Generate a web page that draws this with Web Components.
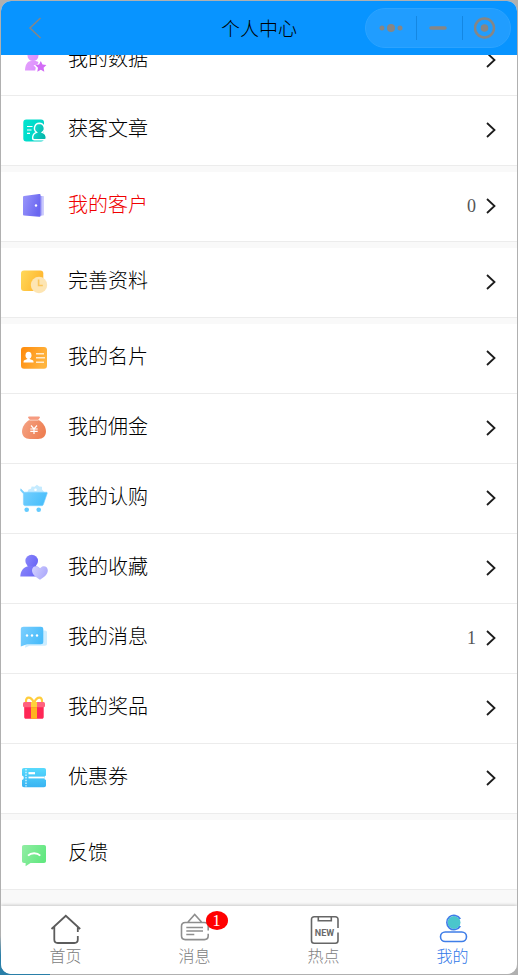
<!DOCTYPE html>
<html lang="zh-CN">
<head>
<meta charset="utf-8">
<meta name="viewport" content="width=device-width, initial-scale=1">
<title>个人中心</title>
<style>
    body {
        margin: 0;
        background: linear-gradient(#b0b0b0 96%, #2a7fa8 98%) left / 50px 100% no-repeat, #b0b0b0;
        font-family: "Noto Sans CJK SC", sans-serif;
        font-weight: 300;
        color: #000;
    }
</style>
</head>
<body>
<mp-window>
    <mp-navbar slot="header">个人中心</mp-navbar>
    <mp-group>
        <mp-cell icon="data">我的数据</mp-cell>
        <mp-cell icon="article">获客文章</mp-cell>
    </mp-group>
    <mp-group>
        <mp-cell icon="door" value="0" highlight>我的客户</mp-cell>
    </mp-group>
    <mp-group>
        <mp-cell icon="profile">完善资料</mp-cell>
    </mp-group>
    <mp-group>
        <mp-cell icon="card">我的名片</mp-cell>
        <mp-cell icon="bag">我的佣金</mp-cell>
        <mp-cell icon="cart">我的认购</mp-cell>
        <mp-cell icon="favorite">我的收藏</mp-cell>
        <mp-cell icon="message" value="1">我的消息</mp-cell>
        <mp-cell icon="gift">我的奖品</mp-cell>
        <mp-cell icon="coupon">优惠券</mp-cell>
    </mp-group>
    <mp-group>
        <mp-cell icon="feedback" plain>反馈</mp-cell>
    </mp-group>
    <mp-tabbar slot="footer">
        <mp-tab icon="home">首页</mp-tab>
        <mp-tab icon="notice" badge="1">消息</mp-tab>
        <mp-tab icon="hot">热点</mp-tab>
        <mp-tab icon="mine" active>我的</mp-tab>
    </mp-tabbar>
</mp-window>

<script>
(function () {
    'use strict';

    function grad(id, from, to) {
        return '<linearGradient id="' + id + '" x1="0" y1="0" x2="1" y2="0.4"><stop offset="0" stop-color="' + from + '"/><stop offset="1" stop-color="' + to + '"/></linearGradient>';
    }

    // 28x28 artwork for the cells, 32x32 line icons for the tabs
    var icons = {
        data: [28, grad('a', '#e3a0fb', '#dd90ff') +
            '<g fill="url(#a)"><circle cx="13" cy="9.5" r="5.5"/><path d="M5 24.5c0-5 2-9.5 6-9.5h4.500c1.500 0 2.500.8 3 1.800l-1.500 2-3.500.5 2.300 2.500-.6 2.700H5z"/></g>' +
            '<path fill="#d26cf6" d="M20.800 15l1.700 3.600 3.900.5-2.800 2.700.7 3.900-3.500-1.900-3.500 1.900.7-3.900-2.800-2.700 3.900-.5z"/>'],
        article: [28, grad('a', '#00e5cf', '#00d2c6') + grad('b', '#16dfd0', '#04b8ac') +
            '<rect x="3.300" y="3.500" width="20.700" height="22" rx="3" fill="url(#a)"/>' +
            '<path d="M7 10.500h5.500M7 14h4.500M7 17.300h3" stroke="#fff" stroke-width="1.200"/>' +
            '<path d="M19.300 7.300a5 5 0 0 1 3 9c2.400.8 4 2.800 4 5.700 0 1-.8 1.800-1.800 1.800H14.400c-1 0-1.800-.8-1.800-1.800 0-2.900 1.600-4.900 3.900-5.700a5 5 0 0 1 2.800-9z" fill="url(#b)" stroke="#fff" stroke-width="1.400"/>'],
        door: [28, grad('a', '#9a97fb', '#6a66f0') +
            '<path d="M18 4h5c.7 0 1 .4 1 1v17.500c0 .7-.3 1-1 1h-5z" fill="#d0cffd"/><path d="M18 4h4.200v19.500H18z" fill="#afadf9"/>' +
            '<path d="M4 4l15-2c1-.1 1.600.4 1.600 1.300v20.200c0 1-.6 1.500-1.600 1.300L4 23.600c-.7-.1-1-.5-1-1.200V5.200C3 4.500 3.300 4.100 4 4z" fill="url(#a)"/>' +
            '<circle cx="16" cy="13.500" r="1.200" fill="#fff"/>'],
        profile: [28, grad('a', '#ffd95a', '#ffb62e') +
            '<rect x="1" y="2.500" width="22.300" height="20.500" rx="3" fill="url(#a)"/>' +
            '<circle cx="19" cy="17" r="8.200" fill="#fde5b3"/>' +
            '<path d="M18.600 11.500v6h4.200" fill="none" stroke="#fbc65b" stroke-width="1.600"/>'],
        card: [28, grad('a', '#ff8a0a', '#ffb43e') +
            '<rect x="1" y="3" width="26" height="21.700" rx="3" fill="url(#a)"/>' +
            '<g fill="#fff"><ellipse cx="8.500" cy="11.200" rx="3" ry="3.500"/><path d="M7.300 13h2.400v2l3 1.300c.6.300.9 1 .9 2.200H3.500c0-1.200.3-1.900.9-2.200l2.900-1.300z"/></g>' +
            '<path d="M16 9.800h8M16 13.800h9M16 18.300h8" stroke="#ffeacb" stroke-width="1.500"/>'],
        bag: [28, grad('a', '#f5a486', '#ee8054') +
            '<path d="M9 2.500h10c.9 0 1.200.8.700 1.500L18 6h-8L8.300 4c-.5-.7-.2-1.500.7-1.500z" fill="#f69b80"/>' +
            '<path d="M9.500 6h9c4 2 7.500 6.500 7.500 11.500 0 4.500-3 7.500-8 7.500h-8c-5 0-8-3-8-7.500C2 12.500 5.500 8 9.500 6z" fill="url(#a)"/><path d="M9.500 6.200h9" stroke="#fbd0bf"/>' +
            '<path d="M11 11.500l3 3.300 3-3.300M10.300 15h7.400M10.300 17.300h7.400M14 14.800V20" fill="none" stroke="#fff" stroke-width="1.200"/>'],
        cart: [28, grad('a', '#7dd2ff', '#4bbffb') +
            '<path d="M7 9l1.500-3.500 2.500-.8.600-2.200 3 .2 2.300-1.900 2.300 1.700 2.800.2v2.800L25 9z" fill="#c5ebff"/><circle cx="15.500" cy="5.800" r="1.300" fill="#fff"/>' +
            '<path d="M.8 4.800l3.400 3.400h22.200c.7 0 1 .5.800 1.200l-3.800 11c-.3.800-.9 1.300-1.800 1.300H5.300c-1.200 0-1.900-.7-1.900-1.900V9.700L.5 6.500z" fill="url(#a)" stroke="#7ed2ff" stroke-width=".6"/>' +
            '<g fill="#63cbff"><circle cx="6.700" cy="25.700" r="2.300"/><circle cx="18.700" cy="25.700" r="2.300"/></g>'],
        favorite: [28, grad('a', '#8a87fb', '#6d69f6') + grad('b', '#d4d2ff', '#aeabfb') +
            '<circle cx="11.700" cy="7" r="6.300" fill="url(#a)"/><path d="M.3 22.500c.2-5.500 2.700-9 8-10.500h7c2 .6 3.400 1.400 4.500 2.500v8z" fill="url(#a)"/>' +
            '<path d="M20 25.800c-4-2.500-8-5.300-8-9.500 0-4.200 5.200-5.700 8-2 2.800-3.700 7.800-2.200 7.800 2 0 4.200-3.800 7-7.800 9.500z" fill="url(#b)"/>'],
        message: [28, grad('a', '#7ccfff', '#49bcfa') +
            '<path d="M8 6.500h17c1.300 0 2 .7 2 2v11.200c0 1.300-.7 2-2 2H9.500L5 23.800z" fill="#cdedff"/>' +
            '<path d="M3.500 2.700h17.300c1.700 0 2.500.8 2.500 2.500v12.500c0 1.700-.8 2.500-2.500 2.500H7L.8 22.500V5.200c0-1.700 1-2.500 2.700-2.500z" fill="url(#a)"/>' +
            '<g fill="#fff"><circle cx="7" cy="11.500" r="1.200"/><circle cx="12" cy="11.500" r="1.200"/><circle cx="17" cy="11.500" r="1.200"/></g>'],
        gift: [28,
            '<path d="M13.500 8C11 2.500 5.500 2 6 8M14.500 8C17 2.500 22.500 2 22 8" fill="none" stroke="#ffcd3c" stroke-width="2.200"/>' +
            '<path d="M4.200 12h19.500v11c0 1.200-.7 1.800-1.800 1.800H6c-1.200 0-1.800-.6-1.800-1.800z" fill="#ff2756"/>' +
            '<rect x="3" y="8" width="22" height="5.200" rx="1.500" fill="#ff627f"/>' +
            '<path d="M11 8h6v5.200h-6z" fill="#ffd13a"/><path d="M11 13.200h6v11.600h-6z" fill="#ffb41f"/>'],
        coupon: [28,
            '<linearGradient id="a" x2="0" y2="1"><stop stop-color="#58dafd"/><stop offset="1" stop-color="#39b3f2"/></linearGradient>' +
            '<path d="M4 4h20c1.300 0 2 .7 2 2v5.500a2.300 2.300 0 0 0 0 4.500v5.300c0 1.300-.7 2-2 2H4c-1.300 0-2-.7-2-2V16a2.300 2.300 0 0 0 0-4.500V6c0-1.300.7-2 2-2z" fill="url(#a)"/>' +
            '<path d="M6 5v17.500" stroke="#d5f5ff" stroke-width="1.400" stroke-dasharray="1.500 1.200"/>' +
            '<path d="M8.500 9.200h6.500" stroke="#fff" stroke-width="2.200"/><path d="M8.500 13.500H24" stroke="#fff" stroke-width="1.800"/>'],
        feedback: [28, grad('a', '#92eda4', '#63e881') +
            '<path d="M4 5h20c1.300 0 2 .7 2 2v14c0 1.300-.7 2-2 2H10.500L5.600 26.200V23H4c-1.300 0-2-.7-2-2V7c0-1.300.7-2 2-2z" fill="url(#a)"/>' +
            '<path d="M8 15.700c3.200-3.300 9-3.300 12.300 0" fill="none" stroke="#fff" stroke-width="1.800"/>'],
        home: [32,
            '<path d="M1.500 16L15.800 2.800 30.200 16M4.300 14v12.500c0 2.300 1 3.500 3.500 3.500h16.500c2.300 0 3.500-1 3.500-3.500V23M27.800 14v5" fill="none" stroke="#5c5c5c" stroke-width="1.800"/>'],
        notice: [32,
            '<path d="M9 9l6.700-7.500L22.500 9M29.200 17.500v-4.200c0-2.300-1.500-3.800-3.800-3.800H6.300c-2.300 0-3.800 1.500-3.800 3.800v9.500c0 2.300 1.500 3.800 3.800 3.800h19.100c2.300 0 3.800-1.500 3.800-3.800v-2" fill="none" stroke="#8e8e8e" stroke-width="1.600"/>' +
            '<path d="M7.300 14.500H24M7.300 18H24M7.300 21.500h8" stroke="#8e8e8e" stroke-width="1.500"/>'],
        hot: [32,
            '<path d="M30 15V6.500c0-1.700-1-2.700-2.700-2.700H6.200c-1.700 0-2.700 1-2.700 2.700v21c0 1.700 1 2.700 2.700 2.700h21.100c1.700 0 2.700-1 2.700-2.700V19.500M10.300 3.800v4h13v-4" fill="none" stroke="#666" stroke-width="1.600"/>' +
            '<text x="16.500" y="23" text-anchor="middle" font-family="Liberation Sans Narrow, Roboto, sans-serif" font-weight="700" font-size="9" fill="#6a6a6a">NEW</text>'],
        mine: [32,
            '<circle cx="17" cy="9.500" r="6.500" fill="#4ac6cc"/>' +
            '<path d="M23.300 6a7.200 7.200 0 1 0 0 7" fill="none" stroke="#3f7ee8" stroke-width="1.600"/>' +
            '<rect x="3.500" y="19" width="26" height="9.500" rx="4.700" fill="none" stroke="#3f7ee8" stroke-width="1.600"/>']
    };

    function define(selector, render) {
        window.customElements.define(selector, class extends HTMLElement {
            connectedCallback() {
                if (this.shadowRoot) {
                    return;
                }
                var $template = document.createElement('template');
                $template.innerHTML = render(this);
                this.attachShadow({ mode: 'open' }).appendChild($template.content.cloneNode(true));
            }
        });
    }

    define('mp-icon', function (ele) {
        var icon = icons[ele.getAttribute('name')];
        return `
            <style>
                :host { display: block; flex: none; }
                svg { display: block; }
            </style>
            <svg width="${icon[0]}" height="${icon[0]}" viewBox="0 0 ${icon[0]} ${icon[0]}" aria-hidden="true">${icon[1]}</svg>`;
    });

    define('mp-window', function () {
        return `
            <style>
                :host {
                    display: flex;
                    flex-direction: column;
                    box-sizing: border-box;
                    height: 100vh;
                    padding: 1px;
                }
                .frame {
                    flex: 1;
                    min-height: 0;
                    display: flex;
                    flex-direction: column;
                    overflow: hidden;
                    border-radius: 10px;
                    background: #f9f9f9;
                }
                /* the list stays scrolled to its end */
                main {
                    flex: 1;
                    min-height: 0;
                    display: flex;
                    flex-direction: column;
                    justify-content: flex-end;
                    gap: 6px;
                    padding-bottom: 16px;
                    overflow: hidden;
                }
            </style>
            <div class="frame">
                <slot name="header"></slot>
                <main><slot></slot></main>
                <slot name="footer"></slot>
            </div>`;
    });

    define('mp-navbar', function () {
        return `
            <style>
                :host {
                    position: relative;
                    z-index: 1;
                    flex: none;
                    display: grid;
                    grid-template-columns: 1fr auto 1fr;
                    align-items: center;
                    height: 54px;
                    padding: 0 6px;
                    background: #0894ff;
                }
                button { display: grid; place-items: center; padding: 0; border: 0; background: none; }
                svg { display: block; fill: none; stroke: #868686; }
                h1 { margin: 0; font-size: 19px; line-height: 28px; font-weight: 300; }
                .back { width: 56px; height: 40px; }
                .capsule {
                    justify-self: end;
                    display: grid;
                    grid-template-columns: 50px 46px 48px;
                    box-sizing: border-box;
                    height: 40px;
                    border: 1px solid #2ca3ff;
                    border-radius: 20px;
                    background: #209dff;
                }
                .capsule button + button::before {
                    content: "";
                    grid-area: 1 / 1;
                    justify-self: start;
                    width: 1px;
                    height: 24px;
                    background: #1487e2;
                }
                .capsule button > svg { grid-area: 1 / 1; }
                .dots circle { fill: #868686; stroke: none; }
            </style>
            <button class="back" aria-label="返回"><svg width="14" height="22" stroke-width="1.500"><path d="M12.500 1L2 11l10.500 10"/></svg></button>
            <h1><slot></slot></h1>
            <div class="capsule">
                <button aria-label="更多"><svg class="dots" width="26" height="10"><circle cx="4" cy="5" r="2.500"/><circle cx="13" cy="5" r="4"/><circle cx="22" cy="5" r="2.500"/></svg></button>
                <button aria-label="最小化"><svg width="20" height="6" stroke-width="3.500" stroke-linecap="round"><path d="M2 3h14"/></svg></button>
                <button aria-label="关闭"><svg width="24" height="24" stroke-width="2.500"><circle cx="10.500" cy="12" r="9.500"/><circle cx="10.500" cy="12" r="3.800" fill="#868686" stroke="none"/></svg></button>
            </div>`;
    });

    define('mp-group', function () {
        return `
            <style>
                :host { display: block; flex: none; background: #fff; }
            </style>
            <slot></slot>`;
    });

    define('mp-cell', function (ele) {
        var value = ele.getAttribute('value');
        return `
            <style>
                :host { display: block; }
                :host([highlight]) .label { color: #f00000; }
                a {
                    display: flex;
                    align-items: center;
                    box-sizing: border-box;
                    height: 70px;
                    padding: 0 20px 2px 19px;
                    border-bottom: 1px solid #ececec;
                    color: inherit;
                    text-decoration: none;
                }
                .label { flex: 1; padding: 0 0 4px 20px; font-size: 20px; line-height: 30px; }
                .value { padding-right: 9px; font: 400 18px/24px "Liberation Serif", serif; color: #555; }
                .arrow { display: block; }
            </style>
            <a href="#">
                <mp-icon name="${ele.getAttribute('icon')}"></mp-icon>
                <span class="label"><slot></slot></span>
                ${value ? '<span class="value">' + value + '</span>' : ''}
                ${ele.hasAttribute('plain') ? '' : '<svg class="arrow" width="12" height="16" fill="none" stroke="#1c1c1c" stroke-width="1.800" aria-hidden="true"><path d="M2 1l7.500 7L2 15"/></svg>'}
            </a>`;
    });

    define('mp-tabbar', function () {
        return `
            <style>
                :host { position: relative; display: block; flex: none; background: #fff; box-shadow: 0 -1px 3px #00000030; }
                nav { display: grid; grid-template-columns: repeat(4, 1fr); }
            </style>
            <nav><slot></slot></nav>`;
    });

    define('mp-tab', function (ele) {
        var badge = ele.getAttribute('badge');
        return `
            <style>
                :host { display: block; color: #808080; }
                :host([active]) { color: #3077e8; }
                a {
                    display: flex;
                    flex-direction: column;
                    align-items: center;
                    height: 61px;
                    padding-top: 7px;
                    color: inherit;
                    font-size: 16px;
                    line-height: 20px;
                    text-decoration: none;
                }
                .icon { position: relative; }
                .badge {
                    position: absolute;
                    top: -2px;
                    left: 27px;
                    width: 22px;
                    border-radius: 50%;
                    background: #f00;
                    color: #fff;
                    font: 400 16px/19px "Liberation Serif", serif;
                    text-align: center;
                }
            </style>
            <a href="#">
                <span class="icon">
                    <mp-icon name="${ele.getAttribute('icon')}"></mp-icon>
                    ${badge ? '<span class="badge">' + badge + '</span>' : ''}
                </span>
                <span><slot></slot></span>
            </a>`;
    });
}());
</script>
</body>
</html>
